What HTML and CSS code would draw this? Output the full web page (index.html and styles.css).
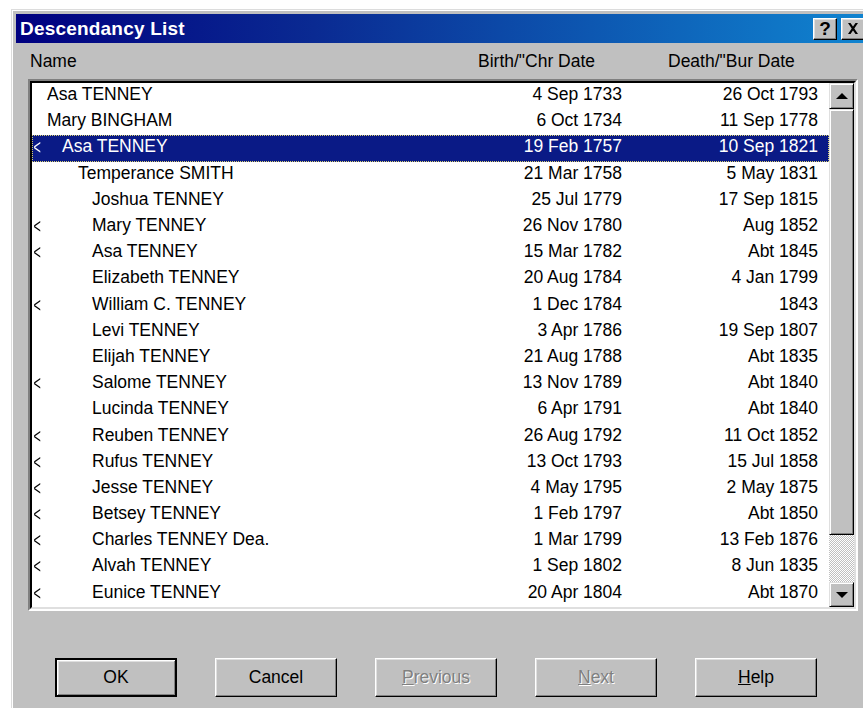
FILE: index.html
```html
<!DOCTYPE html>
<html>
<head>
<meta charset="utf-8">
<title>Descendancy List</title>
<link rel="stylesheet" href="styles.css">
</head>
<body>
<div class="window">
  <div class="titlebar">
    <span class="title">Descendancy List</span>
    <div class="title-buttons">
      <span class="tbtn">?</span>
      <span class="tbtn">
        <svg width="12" height="11" viewBox="0 0 12 11"><path d="M1 0h2.5L6 3.6 8.5 0H11L7.3 5.5 11 11H8.5L6 7.4 3.5 11H1l3.7-5.5z" fill="#000"/></svg>
      </span>
    </div>
  </div>

  <div class="colheads">
    <span class="h-name">Name</span>
    <span class="h-birth">Birth/"Chr Date</span>
    <span class="h-death">Death/"Bur Date</span>
  </div>

  <div class="listbox">
    <div class="listbox-inner">
      <div class="rows">
        <div class="row"><span class="mark"></span><span class="name lvl0">Asa TENNEY</span><span class="birth">4 Sep 1733</span><span class="death">26 Oct 1793</span></div>
        <div class="row"><span class="mark"></span><span class="name lvl0">Mary BINGHAM</span><span class="birth">6 Oct 1734</span><span class="death">11 Sep 1778</span></div>
        <div class="row selected"><span class="mark">&lt;</span><span class="name lvl1">Asa TENNEY</span><span class="birth">19 Feb 1757</span><span class="death">10 Sep 1821</span></div>
        <div class="row"><span class="mark"></span><span class="name lvl2">Temperance SMITH</span><span class="birth">21 Mar 1758</span><span class="death">5 May 1831</span></div>
        <div class="row"><span class="mark"></span><span class="name lvl3">Joshua TENNEY</span><span class="birth">25 Jul 1779</span><span class="death">17 Sep 1815</span></div>
        <div class="row"><span class="mark">&lt;</span><span class="name lvl3">Mary TENNEY</span><span class="birth">26 Nov 1780</span><span class="death">Aug 1852</span></div>
        <div class="row"><span class="mark">&lt;</span><span class="name lvl3">Asa TENNEY</span><span class="birth">15 Mar 1782</span><span class="death">Abt 1845</span></div>
        <div class="row"><span class="mark"></span><span class="name lvl3">Elizabeth TENNEY</span><span class="birth">20 Aug 1784</span><span class="death">4 Jan 1799</span></div>
        <div class="row"><span class="mark">&lt;</span><span class="name lvl3">William C. TENNEY</span><span class="birth">1 Dec 1784</span><span class="death">1843</span></div>
        <div class="row"><span class="mark"></span><span class="name lvl3">Levi TENNEY</span><span class="birth">3 Apr 1786</span><span class="death">19 Sep 1807</span></div>
        <div class="row"><span class="mark"></span><span class="name lvl3">Elijah TENNEY</span><span class="birth">21 Aug 1788</span><span class="death">Abt 1835</span></div>
        <div class="row"><span class="mark">&lt;</span><span class="name lvl3">Salome TENNEY</span><span class="birth">13 Nov 1789</span><span class="death">Abt 1840</span></div>
        <div class="row"><span class="mark"></span><span class="name lvl3">Lucinda TENNEY</span><span class="birth">6 Apr 1791</span><span class="death">Abt 1840</span></div>
        <div class="row"><span class="mark">&lt;</span><span class="name lvl3">Reuben TENNEY</span><span class="birth">26 Aug 1792</span><span class="death">11 Oct 1852</span></div>
        <div class="row"><span class="mark">&lt;</span><span class="name lvl3">Rufus TENNEY</span><span class="birth">13 Oct 1793</span><span class="death">15 Jul 1858</span></div>
        <div class="row"><span class="mark">&lt;</span><span class="name lvl3">Jesse TENNEY</span><span class="birth">4 May 1795</span><span class="death">2 May 1875</span></div>
        <div class="row"><span class="mark">&lt;</span><span class="name lvl3">Betsey TENNEY</span><span class="birth">1 Feb 1797</span><span class="death">Abt 1850</span></div>
        <div class="row"><span class="mark">&lt;</span><span class="name lvl3">Charles TENNEY Dea.</span><span class="birth">1 Mar 1799</span><span class="death">13 Feb 1876</span></div>
        <div class="row"><span class="mark">&lt;</span><span class="name lvl3">Alvah TENNEY</span><span class="birth">1 Sep 1802</span><span class="death">8 Jun 1835</span></div>
        <div class="row"><span class="mark">&lt;</span><span class="name lvl3">Eunice TENNEY</span><span class="birth">20 Apr 1804</span><span class="death">Abt 1870</span></div>
      </div>
      <div class="scrollbar">
        <div class="sb-btn"><span class="arrow-up"></span></div>
        <div class="sb-thumb"></div>
        <div class="sb-track"></div>
        <div class="sb-btn sb-down"><span class="arrow-down"></span></div>
      </div>
    </div>
  </div>

  <div class="buttons">
    <div class="btn default"><span>OK</span></div>
    <div class="btn"><span>Cancel</span></div>
    <div class="btn disabled"><span><u>P</u>revious</span></div>
    <div class="btn disabled"><span><u>N</u>ext</span></div>
    <div class="btn"><span><u>H</u>elp</span></div>
  </div>
</div>
</body>
</html>
```

FILE: styles.css
```css
html, body {
  margin: 0;
  padding: 0;
  background: #ffffff;
  overflow: hidden;
  width: 863px;
  height: 708px;
}

body {
  font-family: "Liberation Sans", Arial, sans-serif;
  font-size: 17.5px;
  color: #000;
}

/* dialog frame */
.window {
  margin: 9px 0 0 11px;
  width: 851px;
  height: 720px;
  padding: 4px;
  background: #c0c0c0;
  border-top: 1px solid #dcdcdc;
  border-left: 1px solid #dcdcdc;
  box-shadow: inset 1px 1px #ffffff;
}

.titlebar {
  height: 29px;
  display: flex;
  align-items: center;
  padding-left: 4px;
  background: linear-gradient(90deg, #000080 0%, #0a2a92 35%, #1084d0 100%);
}

.title {
  color: #fff;
  font-weight: bold;
  font-size: 19px;
  letter-spacing: 0.2px;
  padding-top: 1px;
}

.title-buttons {
  margin-left: auto;
  margin-right: 2px;
  display: flex;
  gap: 4px;
}

.tbtn {
  width: 22px;
  height: 20px;
  background: #c0c0c0;
  border: 1px solid;
  border-color: #ffffff #000000 #000000 #ffffff;
  box-shadow: inset -1px -1px #808080, inset 1px 1px #dfdfdf;
  display: flex;
  align-items: center;
  justify-content: center;
  font-weight: bold;
  font-size: 19px;
  line-height: 1;
}

/* column headers */
.colheads {
  height: 36px;
  display: grid;
  grid-template-columns: 448px 190px 1fr;
  align-items: center;
  padding-left: 14px;
}

/* sunken list box */
.listbox {
  margin-left: 12px;
  width: 826px;
  border: 2px solid;
  border-color: #808080 #ffffff #ffffff #808080;
}

.listbox-inner {
  display: flex;
  border: 2px solid;
  border-color: #000000 #dfdfdf #dfdfdf #000000;
  background: #ffffff;
}

.rows {
  width: 798px;
}

.row {
  height: 26.2px;
  display: grid;
  grid-template-columns: 14px 1fr 160px 196px;
  align-items: center;
  padding: 0 11px 3px 1px;
  white-space: nowrap;
  box-sizing: border-box;
}

.row.selected {
  background: #0a1a86;
  color: #ffffff;
  outline: 1px dotted #d8d070;
  outline-offset: -1px;
}

.mark {
  font-size: 21px;
  line-height: 1;
  display: inline-block;
  transform: scaleX(0.6);
  transform-origin: left center;
  padding-left: 1px;
}

.name.lvl0 { padding-left: 0; }
.name.lvl1 { padding-left: 15px; }
.name.lvl2 { padding-left: 31px; }
.name.lvl3 { padding-left: 45px; }

.birth, .death {
  text-align: right;
}

/* vertical scroll bar */
.scrollbar {
  width: 25px;
  display: flex;
  flex-direction: column;
}

.sb-btn, .sb-thumb {
  box-sizing: border-box;
  background: #c0c0c0;
  border: 1px solid;
  border-color: #dfdfdf #000000 #000000 #dfdfdf;
  box-shadow: inset 1px 1px #ffffff, inset -1px -1px #808080;
}

.sb-btn {
  height: 26px;
  display: flex;
  align-items: center;
  justify-content: center;
}

.sb-down {
  height: 25px;
}

.sb-thumb {
  height: 426px;
}

.sb-track {
  height: 47px;
  background: repeating-conic-gradient(#c0c0c0 0 25%, #ffffff 0 50%) 0 0 / 2px 2px;
}

.arrow-up {
  width: 0;
  height: 0;
  border-left: 6px solid transparent;
  border-right: 6px solid transparent;
  border-bottom: 6px solid #000;
}

.arrow-down {
  width: 0;
  height: 0;
  border-left: 6px solid transparent;
  border-right: 6px solid transparent;
  border-top: 6px solid #000;
}

/* dialog buttons */
.buttons {
  display: flex;
  gap: 38px;
  padding-left: 39px;
  margin-top: 47px;
}

.btn {
  box-sizing: border-box;
  width: 122px;
  height: 39px;
  background: #c0c0c0;
  border: 1px solid;
  border-color: #ffffff #000000 #000000 #ffffff;
  box-shadow: inset -1px -1px #808080, inset 1px 1px #dfdfdf;
  display: flex;
  align-items: center;
  justify-content: center;
  padding-bottom: 1px;
}

.btn.default {
  border: 2px solid #000;
  box-shadow: inset 1px 1px #ffffff, inset -1px -1px #808080, inset 2px 2px #dfdfdf;
}

.btn.disabled {
  color: #808080;
  text-shadow: 1px 1px #ffffff;
}
```
